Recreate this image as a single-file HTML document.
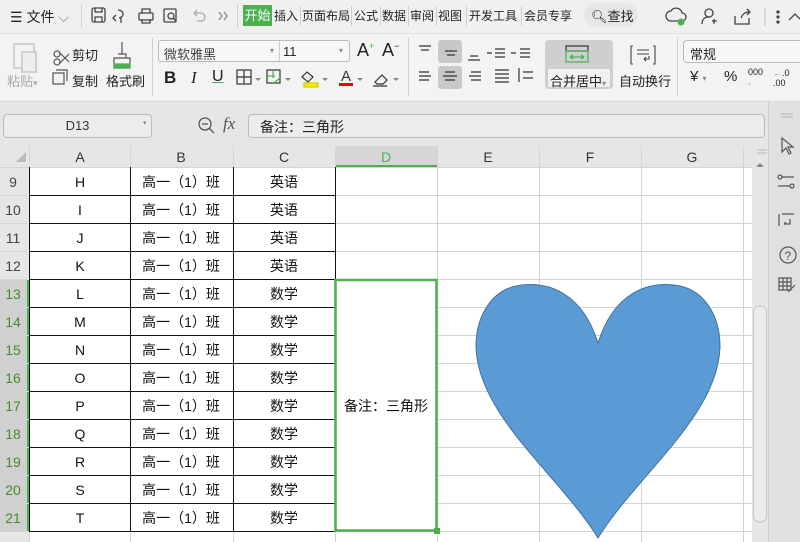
<!DOCTYPE html>
<html><head><meta charset="utf-8"><style>
*{margin:0;padding:0;box-sizing:border-box}
body{width:800px;height:542px;overflow:hidden;background:#f0f0f0;font-family:"Liberation Sans","Noto Sans CJK SC",sans-serif;position:relative;color:#222}
.a{position:absolute;white-space:nowrap}
.t{font-size:13px}
.sep{position:absolute;width:1px;background:#cfcfcf}
.tab{position:absolute;top:7px;font-size:12px;white-space:nowrap}
</style></head><body>
<!-- title bar -->
<div class="a" style="left:0;top:0;width:800px;height:33px;background:#f0f0f0"></div>
<div class="a t" style="left:10px;top:7px;font-size:14px">☰ 文件 <span style="color:#888">⌵</span></div>
<div class="sep" style="left:81px;top:4px;height:24px"></div>
<svg class="a" style="left:88px;top:5px" width="150" height="22" fill="none" stroke="#444" stroke-width="1.3">
<rect x="4" y="3" width="13" height="14" rx="2"/><path d="M7 3v4h7V3M7 17v-5h7v5"/>
<path d="M30 5c6 0 7 7 1 8M28 10l-3 3 3 3M33 13v5"/>
<rect x="51" y="8" width="14" height="7" rx="1"/><path d="M54 8V4h8v4M54 14v4h8v-4"/>
<rect x="76" y="4" width="12" height="13" rx="1"/><circle cx="83" cy="11" r="3"/><path d="M85 13l3 3"/>
<path d="M106 8h7a4 4 0 010 8h-4M106 8l3-3M106 8l3 3" stroke="#aaa"/>
<path d="M131 7l3 4-3 4M136 7l3 4-3 4" stroke="#888"/>
</svg>
<div class="sep" style="left:237px;top:4px;height:24px"></div>
<div class="a t" style="left:243px;top:5px;height:21px;width:29px;background:#4caf50;color:#fff;font-size:13px;line-height:21px;text-align:center">开始</div>
<div class="tab" style="left:274px">插入</div>
<div class="sep" style="left:300px;top:6px;height:20px"></div>
<div class="tab" style="left:302px">页面布局</div>
<div class="sep" style="left:351px;top:6px;height:20px"></div>
<div class="tab" style="left:354px">公式</div>
<div class="sep" style="left:380px;top:6px;height:20px"></div>
<div class="tab" style="left:382px">数据</div>
<div class="sep" style="left:408px;top:6px;height:20px"></div>
<div class="tab" style="left:410px">审阅</div>
<div class="sep" style="left:436px;top:6px;height:20px"></div>
<div class="tab" style="left:438px">视图</div>
<div class="sep" style="left:466px;top:6px;height:20px"></div>
<div class="tab" style="left:469px">开发工具</div>
<div class="sep" style="left:521px;top:6px;height:20px"></div>
<div class="tab" style="left:524px">会员专享</div>
<div class="a" style="left:584px;top:3px;width:54px;height:24px;background:#e6e6e6;border-radius:12px"></div>
<div class="a t" style="left:591px;top:6px;font-size:13px">🔍︎查找</div>
<svg class="a" style="left:665px;top:4px" width="135" height="24" fill="none" stroke="#444" stroke-width="1.3">
<path d="M6 17a5 5 0 010-10 6 6 0 0111 2 4 4 0 010 8z"/><circle cx="16" cy="18" r="3.5" fill="#4caf50" stroke="none"/>
<circle cx="44" cy="9" r="4"/><path d="M37 20c0-5 3-7 7-7M49 15v5M47 17h5"/>
<path d="M70 12v8h14v-6M76 14c2-5 5-6 9-6M82 5l3 3-3 3"/>
<path d="M100 4v18" stroke="#ccc"/><circle cx="113" cy="8" r="1" fill="#444"/><circle cx="113" cy="13" r="1" fill="#444"/><circle cx="113" cy="18" r="1" fill="#444"/>
<path d="M124 16l6-6 6 6"/>
</svg>
<!-- ribbon -->
<div class="a" style="left:0;top:33px;width:800px;height:67px;background:#f3f3f3;border-top:1px solid #e0e0e0"></div>
<svg class="a" style="left:8px;top:38px" width="140" height="58" fill="none" stroke="#555" stroke-width="1.2">
<rect x="6" y="6" width="20" height="24" stroke="#bbb"/><rect x="14" y="14" width="14" height="20" fill="#eee" stroke="#bbb"/>
<circle cx="49" cy="16" r="3"/><circle cx="49" cy="24" r="3"/><path d="M51 14l10 10M51 26l10-10"/>
<rect x="45" y="35" width="11" height="11"/><path d="M48 32h11v11"/>
<path d="M114 4v12M110 16h8v4M106 20h16v10h-16z"/><rect x="106" y="26" width="16" height="4" fill="#4caf50" stroke="#4caf50"/>
</svg>
<div class="a t" style="left:7px;top:71px;color:#aaa">粘贴<span style="font-size:9px">▾</span></div>
<div class="a t" style="left:72px;top:45px">剪切</div>
<div class="a t" style="left:72px;top:71px">复制</div>
<div class="a t" style="left:106px;top:71px">格式刷</div>
<div class="sep" style="left:152px;top:38px;height:58px"></div>
<div class="a" style="left:158px;top:40px;width:192px;height:22px;border:1px solid #bbb;border-radius:3px;background:#f7f7f7"></div>
<div class="sep" style="left:279px;top:41px;height:20px;background:#ccc"></div>
<div class="a t" style="left:164px;top:44px;color:#444">微软雅黑</div>
<div class="a" style="left:270px;top:46px;font-size:8px;color:#888">▾</div>
<div class="a t" style="left:283px;top:44px">11</div>
<div class="a" style="left:339px;top:46px;font-size:8px;color:#888">▾</div>
<div class="a" style="left:357px;top:40px;font-size:18px">A<sup style="font-size:9px;color:#4caf50">+</sup></div>
<div class="a" style="left:382px;top:40px;font-size:18px">A<sup style="font-size:9px">−</sup></div>
<div class="a" style="left:164px;top:68px;font-size:17px;font-weight:bold">B</div>
<div class="a" style="left:191px;top:68px;font-size:17px;font-style:italic;font-family:'Liberation Serif'">I</div>
<div class="a" style="left:212px;top:68px;font-size:16px;text-decoration:underline;text-decoration-color:#4caf50">U</div>
<svg class="a" style="left:235px;top:66px" width="170" height="24" fill="none" stroke="#333" stroke-width="1.2">
<rect x="2" y="4" width="14" height="14"/><path d="M9 4v14M2 11h14"/><path d="M20 12l3 3 3-3" fill="#888" stroke="none"/>
<rect x="32" y="4" width="13" height="13"/><path d="M32 10h8M38 4v8M38 18l8-7" stroke="#4caf50"/><path d="M50 12l3 3 3-3" fill="#888" stroke="none"/>
<path d="M72 6l6 5-5 5-6-5z"/><rect x="69" y="17" width="14" height="4" fill="#ffeb00" stroke="#cc0"/><path d="M87 12l3 3 3-3" fill="#888" stroke="none"/>
<text x="106" y="15" font-size="15" fill="#333" stroke="none" font-family="Liberation Sans">A</text><rect x="104" y="17" width="14" height="3" fill="#e00" stroke="none"/><path d="M122 12l3 3 3-3" fill="#888" stroke="none"/>
<path d="M140 16l7-7 5 5-4 4h-6zM138 20h14"/><path d="M158 12l3 3 3-3" fill="#888" stroke="none"/>
</svg>
<div class="sep" style="left:408px;top:38px;height:58px"></div>
<div class="a" style="left:438px;top:40px;width:24px;height:23px;background:#c8c8c8;border-radius:3px"></div>
<div class="a" style="left:438px;top:66px;width:24px;height:23px;background:#c8c8c8;border-radius:3px"></div>
<svg class="a" style="left:415px;top:42px" width="120" height="48" stroke="#333" stroke-width="1.2" fill="none">
<path d="M4 4h12M6 8h8M30 9h12M32 13h8M55 14h8M53 18h12M80 7h10M80 11h10M80 15h10M72 11h5" /><path d="M105 7h10M105 11h10M105 15h10M96 11h5" stroke="#333"/>
<path d="M4 30h10M4 34h12M4 38h10M30 30h10M28 34h14M30 38h10M56 30h10M54 34h12M56 38h10M80 28h14M80 32h14M80 36h14M80 40h14M104 26v14M108 30h10M108 36h10M122 26v14"/>
</svg>
<div class="a" style="left:545px;top:40px;width:68px;height:49px;background:#cfcfcf;border-radius:4px"></div>
<div class="a" style="left:548px;top:69px;width:62px;height:18px;background:#f0f0f0;border-radius:2px"></div>
<svg class="a" style="left:565px;top:45px" width="30" height="20" fill="none" stroke-width="1.2"><rect x="1" y="1" width="22" height="5" stroke="#333"/><rect x="1" y="6" width="22" height="11" stroke="#4caf50"/><path d="M5 12h14M5 12l3-2M5 12l3 2M19 12l-3-2M19 12l-3 2" stroke="#4caf50"/></svg>
<div class="a t" style="left:550px;top:71px">合并居中<span style="font-size:8px;color:#888">▾</span></div>
<svg class="a" style="left:630px;top:44px" width="26" height="22" fill="none" stroke="#444" stroke-width="1.1"><path d="M3 2H1v18h2M23 2h2v18h-2M7 6h12M7 10h12M14 15h5v-3M14 15l2-2M14 15l2 2"/></svg>
<div class="a t" style="left:619px;top:71px">自动换行</div>
<div class="sep" style="left:677px;top:38px;height:58px"></div>
<div class="a" style="left:683px;top:40px;width:120px;height:23px;border:1px solid #bbb;border-radius:4px;background:#f7f7f7"></div>
<div class="a t" style="left:690px;top:44px">常规</div>
<div class="a" style="left:690px;top:68px;font-size:15px">¥ <span style="font-size:8px;color:#888">▾</span></div>
<div class="a" style="left:724px;top:68px;font-size:15px">%</div>
<div class="a" style="left:748px;top:68px;font-size:9px;line-height:9px">000<br><span style="color:#4caf50">,</span></div>
<div class="a" style="left:773px;top:68px;font-size:9px;line-height:10px"><span style="color:#4caf50">←</span>.0<br>.00</div>
<!-- formula bar -->
<div class="a" style="left:0;top:101px;width:800px;height:45px;background:#e6e6e6;border-top:1px solid #d8d8d8"></div>
<div class="a" style="left:3px;top:114px;width:149px;height:24px;border:1px solid #bbb;border-radius:4px;background:#ececec;font-size:13px;text-align:center;line-height:22px;color:#333">D13</div>
<div class="a" style="left:143px;top:119px;font-size:7px;color:#888">▾</div>
<svg class="a" style="left:197px;top:116px" width="20" height="20" fill="none" stroke="#555" stroke-width="1.3"><circle cx="8" cy="8" r="6"/><path d="M5 8h6M12 12l5 5"/></svg>
<div class="a" style="left:223px;top:114px;font-size:17px;font-style:italic;color:#555;font-family:'Liberation Serif'">fx</div>
<div class="a" style="left:248px;top:114px;width:517px;height:24px;border:1px solid #bbb;border-radius:4px;background:#ececec"></div>
<div class="a" style="left:260px;top:117px;font-size:14px">备注：三角形</div>
<!-- right panel -->
<div class="a" style="left:768px;top:101px;width:32px;height:441px;background:#e0e0e0;border-left:1px solid #d0d0d0"></div>
<svg class="a" style="left:776px;top:110px" width="22" height="200" fill="none" stroke="#555" stroke-width="1.2">
<path d="M5 4h12M5 7h12" stroke="#bbb"/>
<path d="M6 28l0 14 4-4 3 6 2-1-3-6 5 0z"/>
<circle cx="4" cy="67" r="2"/><path d="M6 67h12M2 76h12"/><circle cx="16" cy="76" r="2"/>
<path d="M3 104v12M6 104h12M8 114h6v-5M8 114l2-2"/>
<circle cx="12" cy="145" r="8"/><text x="8.5" y="150" font-size="12" fill="#555" stroke="none">?</text>
<path d="M3 168h12v12H3zM3 172h12M3 176h12M7 168v12M11 168v12M12 182l7-7"/>
<path d="M2 202h18v4H2zM4 206v10h14v-10M9 210h4"/>
</svg>
<!-- sheet -->
<svg class="a" style="left:0;top:146px" width="768" height="396" font-family="Liberation Sans,Noto Sans CJK SC,sans-serif">
<rect x="0" y="0" width="752" height="396" fill="#fff"/>
<rect x="0" y="0" width="752" height="21" fill="#e6e6e6"/>
<rect x="335" y="0" width="102" height="21" fill="#d6d6d6"/>
<rect x="335" y="19" width="102" height="2" fill="#4caf50"/>
<rect x="0" y="21" width="29" height="375" fill="#e6e6e6"/>
<rect x="0" y="133" width="29" height="252" fill="#d0d0d0"/>
<rect x="27" y="133" width="2" height="252" fill="#4caf50"/>
<path d="M16 16h10V6z" fill="#bbb"/>
<g stroke="#d4d4d4" stroke-width="1">
<path d="M29.5 0v396M130.5 0v396M233.5 0v396M335.5 0v396M437.5 0v396M539.5 0v396M641.5 0v396M743.5 0v396"/>
<path d="M0 21.5h752M0 49.5h752M0 77.5h752M0 105.5h752M0 133.5h752M0 161.5h752M0 189.5h752M0 217.5h752M0 245.5h752M0 273.5h752M0 301.5h752M0 329.5h752M0 357.5h752M0 385.5h752"/>
</g>
<g stroke="#111" stroke-width="1">
<path d="M29.5 21v364M130.5 21v364M233.5 21v364M335.5 21v112"/>
<path d="M29 49.5h306M29 77.5h306M29 105.5h306M29 133.5h306M29 161.5h306M29 189.5h306M29 217.5h306M29 245.5h306M29 273.5h306M29 301.5h306M29 329.5h306M29 357.5h306M29 385.5h306"/>
</g>
<rect x="335.5" y="134" width="101" height="250.5" fill="#fff" stroke="#4caf50" stroke-width="2.5"/>
<rect x="434" y="382" width="6" height="6" fill="#4caf50"/>
<g font-size="14" fill="#333" text-anchor="middle">
<text x="80" y="16">A</text><text x="181" y="16">B</text><text x="284" y="16">C</text><text x="386" y="16" fill="#4caf50">D</text><text x="488" y="16">E</text><text x="590" y="16">F</text><text x="692" y="16">G</text>
</g>
<g font-size="14" fill="#444" text-anchor="middle">
<text x="13" y="41">9</text><text x="13" y="69">10</text><text x="13" y="97">11</text><text x="13" y="125">12</text>
<g fill="#4a8a2a"><text x="13" y="153">13</text><text x="13" y="181">14</text><text x="13" y="209">15</text><text x="13" y="237">16</text><text x="13" y="265">17</text><text x="13" y="293">18</text><text x="13" y="321">19</text><text x="13" y="349">20</text><text x="13" y="377">21</text></g>
</g>
<g font-size="14" fill="#111" text-anchor="middle">
<text x="80" y="41">H</text><text x="80" y="69">I</text><text x="80" y="97">J</text><text x="80" y="125">K</text><text x="80" y="153">L</text><text x="80" y="181">M</text><text x="80" y="209">N</text><text x="80" y="237">O</text><text x="80" y="265">P</text><text x="80" y="293">Q</text><text x="80" y="321">R</text><text x="80" y="349">S</text><text x="80" y="377">T</text>
<g><text x="181" y="41">高一（1）班</text><text x="181" y="69">高一（1）班</text><text x="181" y="97">高一（1）班</text><text x="181" y="125">高一（1）班</text><text x="181" y="153">高一（1）班</text><text x="181" y="181">高一（1）班</text><text x="181" y="209">高一（1）班</text><text x="181" y="237">高一（1）班</text><text x="181" y="265">高一（1）班</text><text x="181" y="293">高一（1）班</text><text x="181" y="321">高一（1）班</text><text x="181" y="349">高一（1）班</text><text x="181" y="377">高一（1）班</text></g>
<text x="284" y="41">英语</text><text x="284" y="69">英语</text><text x="284" y="97">英语</text><text x="284" y="125">英语</text><text x="284" y="153">数学</text><text x="284" y="181">数学</text><text x="284" y="209">数学</text><text x="284" y="237">数学</text><text x="284" y="265">数学</text><text x="284" y="293">数学</text><text x="284" y="321">数学</text><text x="284" y="349">数学</text><text x="284" y="377">数学</text>
<text x="386" y="265">备注：三角形</text>
</g>
<path d="M598 197C582 146 548 136 522 139C493 142 476 168 476 201C478 270 560 330 598 392C636 330 718 270 720 201C720 168 703 142 674 139C648 136 614 146 598 197Z" fill="#5b9bd5" stroke="#41719c" stroke-width="1"/>
<rect x="752" y="0" width="16" height="396" fill="#e6e6e6"/>
<path d="M757 4h10M757 7h10" stroke="#bbb"/>
<path d="M756 21l4-4 4 4z" fill="#888"/>
<rect x="753.5" y="160" width="13" height="216" rx="6" fill="#ececec" stroke="#c4c4c4"/>
</svg>
</body></html>
